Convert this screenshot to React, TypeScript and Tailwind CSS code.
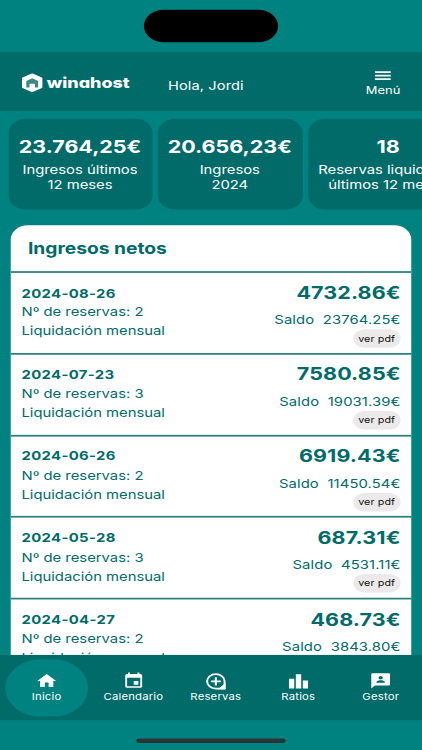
import { MdEvent, MdHome } from "react-icons/md";

type Settlement = {
	date: string;
	bookings: number;
	amount: string;
	balance: string;
};

const summaries = [
	{ value: "23.764,25€", label: "Ingresos últimos", detail: "12 meses", size: "w-[134px]" },
	{ value: "20.656,23€", label: "Ingresos", detail: "2024", size: "w-[135px]" },
	{ value: "18", label: "Reservas liquidadas", detail: "últimos 12 meses", size: "w-[150px]" },
];

const settlements: Settlement[] = [
	{ date: "2024-08-26", bookings: 2, amount: "4732.86€", balance: "23764.25€" },
	{ date: "2024-07-23", bookings: 3, amount: "7580.85€", balance: "19031.39€" },
	{ date: "2024-06-26", bookings: 2, amount: "6919.43€", balance: "11450.54€" },
	{ date: "2024-05-28", bookings: 3, amount: "687.31€", balance: "4531.11€" },
	{ date: "2024-04-27", bookings: 2, amount: "468.73€", balance: "3843.80€" },
];

const BookingsIcon = () => (
	<svg viewBox="0 0 24 24" className="size-[20px]" fill="none" stroke="currentColor" strokeWidth="2.3">
		<path d="M12 2.2a9.8 9.8 0 1 0 0 19.6h9.8V12A9.8 9.8 0 0 0 12 2.2Z" />
		<path d="M12 6.5v11M6.5 12h11" />
		<path d="M17 21.5h4.5V17Z" fill="currentColor" />
	</svg>
);

const RatiosIcon = () => (
	<svg viewBox="0 0 18 18" className="size-[18px]" fill="currentColor">
		<path d="M0 6h5v11H0zM6.5 1h5v16h-5zM13 8h5v9h-5z" />
	</svg>
);

const ManagerIcon = () => (
	<svg viewBox="0 0 24 24" className="size-[21px]" fill="currentColor">
		<path
			fillRule="evenodd"
			d="M20.5 2h-17A1.5 1.5 0 0 0 2 3.500V22l4-4h14.500a1.500 1.500 0 0 0 1.500-1.500v-13A1.500 1.500 0 0 0 20.500 2ZM12 5.500a2.300 2.300 0 1 1 0 4.600 2.300 2.300 0 0 1 0-4.600Zm4.500 8.800h-9v-.8c0-1.500 3-2.300 4.500-2.300s4.500.8 4.500 2.300v.8Z"
		/>
	</svg>
);

const tabs = [
	{ label: "Inicio", icon: <MdHome size={21} />, active: true },
	{ label: "Calendario", icon: <MdEvent size={21} /> },
	{ label: "Reservas", icon: <BookingsIcon /> },
	{ label: "Ratios", icon: <RatiosIcon /> },
	{ label: "Gestor", icon: <ManagerIcon /> },
];

const Logo = () => (
	<div className="flex w-[101px] items-center gap-1 pt-[2px]">
		<svg viewBox="0 0 20 22" className="h-[22px] w-5 shrink-0">
			<path d="M10 1.5 18.5 6v10L10 20.5 1.5 16V6Z" fill="#fff" stroke="#fff" strokeWidth="2" strokeLinejoin="round" />
			<path d="M4.5 9 10 5.8 15.5 9v7.5h-3V12h-5v4.500h-3Z" fill="#3e8785" />
		</svg>
		<span className="mt-[2px] text-[16.7px] font-extrabold leading-none [font-feature-settings:'cv11']">winahost</span>
	</div>
);

const Header = () => (
	<header className="flex h-[67px] shrink-0 items-center bg-[#006b69] pl-[19.5px] pr-5 text-white">
		<Logo />
		<span className="ml-[36px] mt-[10px] text-[13.6px] tracking-[0.1px]">Hola, Jordi</span>
		<button className="ml-auto flex flex-col items-center">
			<svg viewBox="0 0 15 12" className="mt-[7px] h-3 w-[15px]" fill="currentColor">
				<path d="M0 1h15v2H0zM0 5h15v2H0zM0 9h15v2H0z" />
			</svg>
			<span className="mt-[1px] text-[12px] leading-5 tracking-[0.1px]">Menú</span>
		</button>
	</header>
);

const SummaryCard = ({ value, label, detail, size }: (typeof summaries)[number]) => (
	<div
		className={`flex h-[103px] shrink-0 flex-col items-center rounded-[16px] bg-[#006b69] pt-[18px] text-white whitespace-nowrap ${size}`}
	>
		<strong className="text-[20px] font-bold leading-7">{value}</strong>
		<span className="mt-[4px] text-[13.8px] leading-[17px]">{label}</span>
		<span className="text-[13.8px] leading-[17px]">{detail}</span>
	</div>
);

const SettlementRow = ({ date, bookings, amount, balance }: Settlement) => (
	<li className="flex h-[92.8px] justify-between border-t-2 border-[#2a8280] pl-[10px] pr-[10px]">
		<div className="flex flex-col pt-[12.6px] text-[13.8px] leading-[21.8px]">
			<strong className="font-bold tracking-[0.35px]">{date}</strong>
			<span>Nº de reservas: {bookings}</span>
			<span>Liquidación mensual</span>
		</div>
		<div className="flex flex-col items-end">
			<strong className="mt-[8.500px] text-[20px] font-bold leading-7 tracking-[0.1px]">{amount}</strong>
			<span className="mt-[7.500px] text-[13.8px] leading-[18px] tracking-[0.1px]">
				Saldo<span className="ml-2">{balance}</span>
			</span>
			<button className="mt-[2px] h-[21px] rounded-full bg-[#ebe9ea] px-[5px] text-[10px] tracking-[0.1px] text-[#111]">
				ver pdf
			</button>
		</div>
	</li>
);

const BottomNav = () => (
	<nav className="flex h-[74px] shrink-0 items-center bg-[#006b69] pl-[5px] text-white">
		{tabs.map(({ label, icon, active }) => (
			<button
				key={label}
				className={`flex h-[65px] w-[76.8px] shrink-0 flex-col items-center rounded-full pt-[14px] ${
					active ? "mr-[4px] bg-[#008281]" : ""
				}`}
			>
				<span className="flex h-[22px] items-center">{icon}</span>
				<span className="text-[10.5px] leading-[13px] tracking-[0.2px]">{label}</span>
			</button>
		))}
	</nav>
);

const App = () => {
	return (
		<div className="h-[750px] w-[422px] overflow-hidden bg-[#008281]">
			{/* 393x852 device screen, fitted to the frame */}
			<div className="flex h-[852px] w-[393px] origin-top-left scale-x-[1.0738] scale-y-[0.8803] flex-col overflow-hidden bg-[#008281] font-[Inter,sans-serif]">
				<div className="flex h-[59px] shrink-0 justify-center pt-[11px]">
					<div className="h-[37px] w-[125px] rounded-full bg-black" />
				</div>
				<Header />
				<main className="flex min-h-0 flex-1 flex-col overflow-hidden">
					<section className="flex shrink-0 gap-[5px] pl-[7.5px] pt-[8.5px]">
						{summaries.map((summary) => (
							<SummaryCard key={summary.value} {...summary} />
						))}
					</section>
					<section className="mx-[10px] mt-[18px] shrink-0 rounded-t-[16px] bg-white text-[#006b69]">
						<h2 className="h-[52.5px] pl-[16px] pt-[12.5px] text-[17.9px] font-bold leading-7">Ingresos netos</h2>
						<ul>
							{settlements.map((settlement) => (
								<SettlementRow key={settlement.date} {...settlement} />
							))}
						</ul>
					</section>
				</main>
				<BottomNav />
				<div className="flex h-[34px] shrink-0 justify-center pt-[21px]">
					<div className="h-[5px] w-[139px] rounded-full bg-[#2b3435]" />
				</div>
			</div>
		</div>
	);
};

export default App;
